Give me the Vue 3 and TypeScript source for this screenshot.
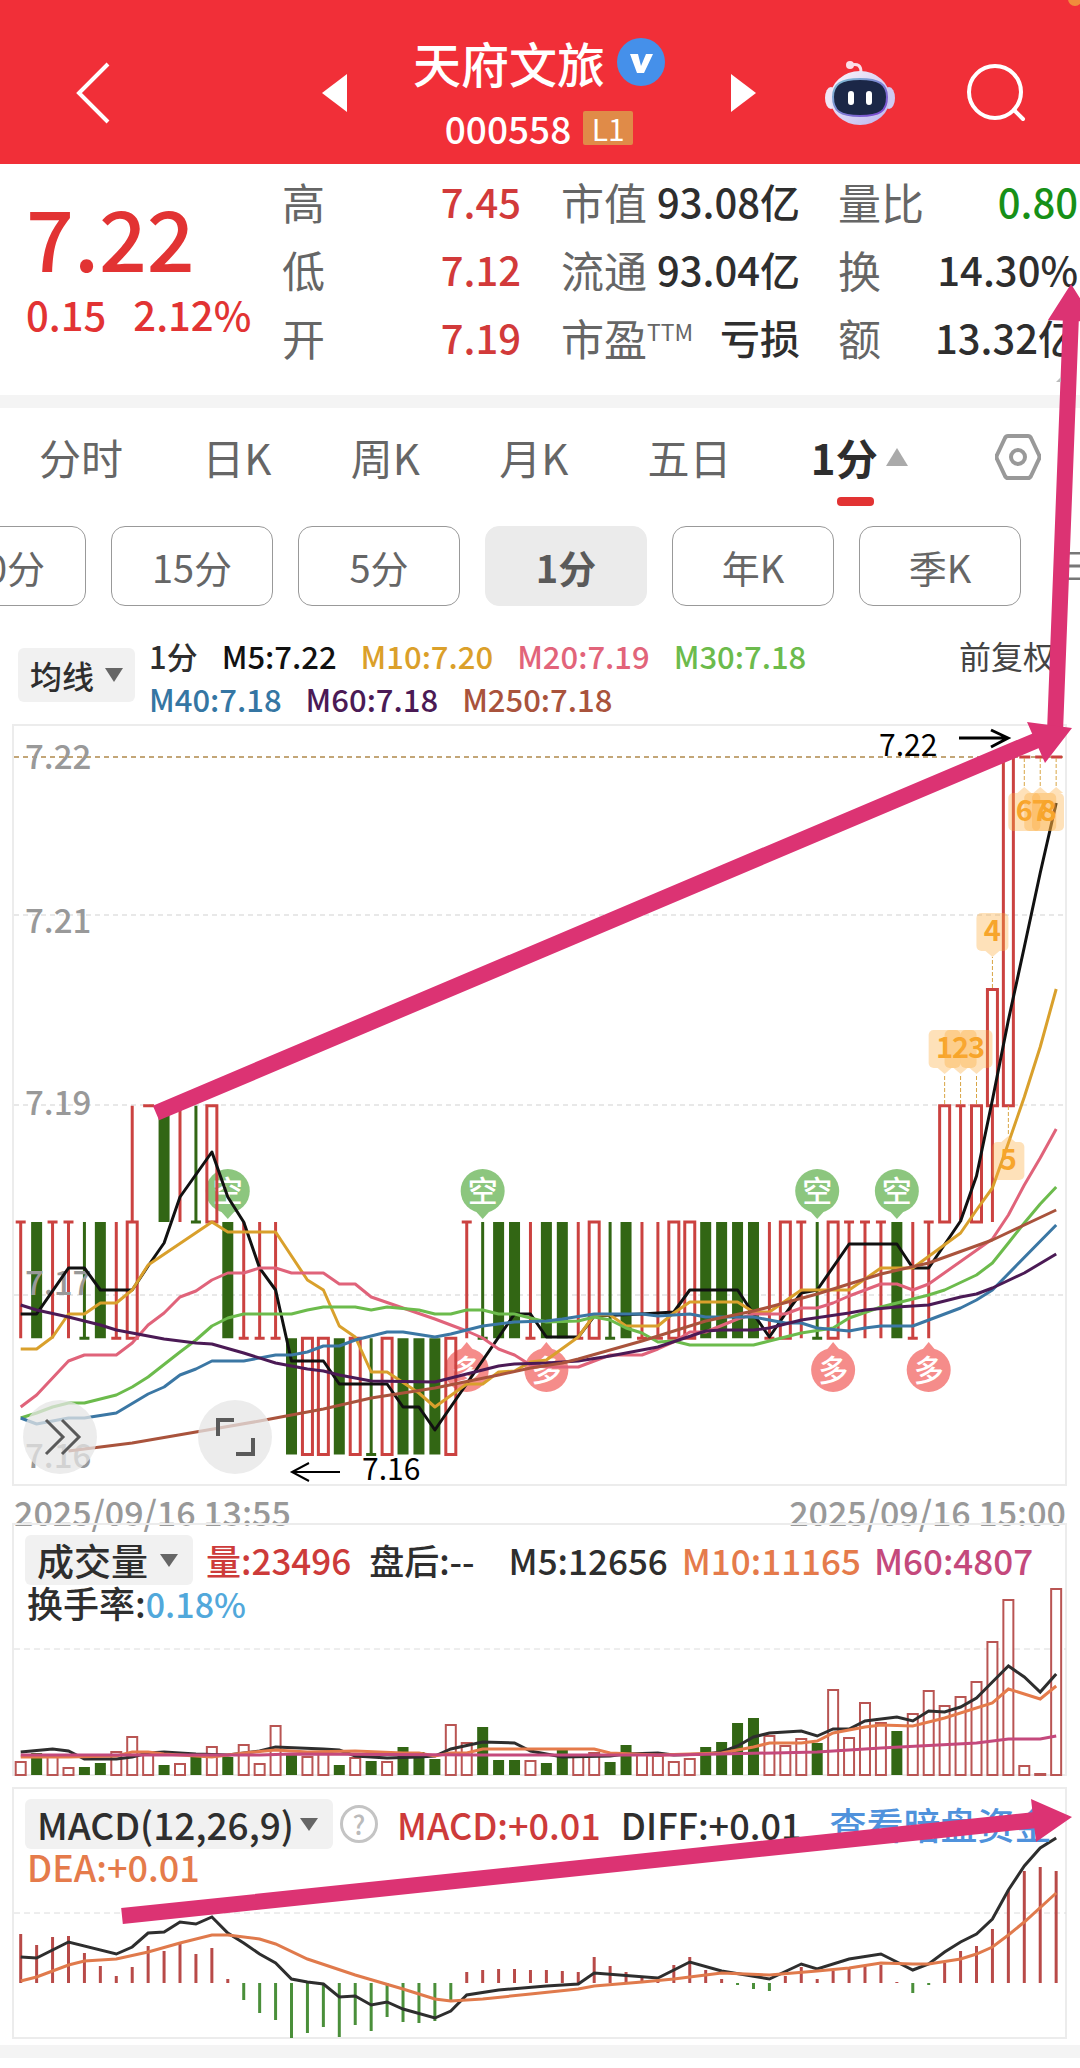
<script setup lang="ts">
type Pt = [number, number]
interface Series { name: string; color: string; pts: Pt[] }

const STEP = 15.93
const xAt = (i: number): number => 20.7 + i * STEP
const yAt = (price: number): number => 757 + (7.22 - price) * 11625
const line = (pts: Pt[]): string => pts.map(([i, y]) => `${xAt(i).toFixed(1)},${y}`).join(' ')

const RED = '#cb4240'
const GREEN = '#326614'

/* Quote header */
const quote = [
  [
    { label: '高', value: '7.45', tone: 'up' },
    { label: '低', value: '7.12', tone: 'up' },
    { label: '开', value: '7.19', tone: 'up' },
  ],
  [
    { label: '市值', value: '93.08亿', tone: '' },
    { label: '流通', value: '93.04亿', tone: '' },
    { label: '市盈', sup: 'TTM', value: '亏损', tone: '' },
  ],
  [
    { label: '量比', value: '0.80', tone: 'down' },
    { label: '换', value: '14.30%', tone: '' },
    { label: '额', value: '13.32亿', tone: '' },
  ],
]

const tabs = ['分时', '日K', '周K', '月K', '五日']
const periods = ['30分', '15分', '5分', '1分', '年K', '季K']

const averages = [
  { text: 'M5:7.22', color: '#111111' },
  { text: 'M10:7.20', color: '#dba02a' },
  { text: 'M20:7.19', color: '#e2647a' },
  { text: 'M30:7.18', color: '#6cbb4c' },
  { text: 'M40:7.18', color: '#3576a3' },
  { text: 'M60:7.18', color: '#4b1a55' },
  { text: 'M250:7.18', color: '#a9533c' },
]

/* Candles. G/R: body, g: green wick closed at the low, r/b: red wick closed at high/low, -: flat */
const runs: [string, number, number][] = [
  ['rGrrgGbR', 7.18, 7.17],
  ['-GrgR', 7.19, 7.18],
  ['Gbbb', 7.18, 7.17],
  ['GRRGRgRGGGR', 7.17, 7.16],
  ['rgGGbGGbRgGbbRRGGGGbRrgRrrrGbr', 7.18, 7.17],
  ['RrR', 7.19, 7.18],
  ['R', 7.2, 7.19],
  ['R', 7.22, 7.19],
  ['---', 7.22, 7.22],
]
const candles = runs
  .flatMap(([kinds, high, low]) => [...kinds].map((kind) => ({ kind, high, low })))
  .map((c, i) => ({ kind: c.kind, x: xAt(i), top: yAt(c.high), bottom: yAt(c.low) }))
const wicks = [
  { x: xAt(7), y1: yAt(7.19), y2: yAt(7.18) },
  { x: xAt(61), y1: yAt(7.19), y2: yAt(7.18) },
]

const priceLines: Series[] = [
  { name: 'M5', color: '#111111', pts: [[0, 1314], [1, 1314], [3, 1268], [4, 1268], [5, 1290], [7, 1290], [8, 1266], [9, 1243], [10, 1197], [12, 1152], [13, 1197], [14, 1222], [15, 1268], [16, 1290], [17, 1361], [19, 1361], [20, 1384], [23, 1384], [24, 1407], [25, 1407], [26, 1430], [31, 1314], [32, 1314], [33, 1337], [35, 1337], [36, 1316], [39, 1314], [41, 1312], [42, 1290], [45, 1290], [46, 1314], [47, 1337], [48, 1314], [49, 1293], [50, 1290], [52, 1244], [55, 1244], [56, 1268], [57, 1268], [59, 1221], [60, 1176], [61, 1100], [62, 1020], [63, 947], [64, 873], [65, 803]] },
  { name: 'M10', color: '#d9a02c', pts: [[0, 1349], [1, 1349], [2, 1337], [3, 1314], [4, 1314], [5, 1303], [6, 1303], [7, 1290], [8, 1265], [12, 1222], [13, 1232], [16, 1232], [18, 1280], [19, 1290], [20, 1326], [21, 1337], [22, 1372], [23, 1372], [25, 1393], [26, 1407], [28, 1384], [29, 1384], [30, 1372], [31, 1371], [32, 1362], [33, 1360], [35, 1337], [36, 1315], [37, 1315], [38, 1326], [40, 1326], [41, 1313], [42, 1302], [45, 1302], [46, 1312], [47, 1312], [49, 1290], [52, 1290], [54, 1268], [56, 1268], [59, 1233], [60, 1210], [61, 1188], [62, 1143], [63, 1097], [64, 1047], [65, 989]] },
  { name: 'M20', color: '#e0637a', pts: [[0, 1407], [1, 1395], [3, 1361], [4, 1355], [6, 1355], [7, 1343], [8, 1325], [9, 1313], [10, 1297], [11, 1291], [12, 1280], [13, 1273], [14, 1273], [15, 1268], [16, 1268], [17, 1273], [19, 1273], [20, 1284], [21, 1284], [22, 1297], [24, 1308], [26, 1319], [28, 1331], [29, 1338], [30, 1349], [31, 1355], [32, 1365], [33, 1367], [35, 1367], [36, 1361], [37, 1355], [39, 1355], [40, 1349], [41, 1342], [42, 1332], [43, 1332], [45, 1319], [46, 1314], [48, 1314], [49, 1308], [50, 1308], [51, 1303], [52, 1296], [54, 1284], [55, 1284], [56, 1290], [57, 1284], [61, 1239], [62, 1215], [63, 1185], [64, 1158], [65, 1129]] },
  { name: 'M30', color: '#6cbb4c', pts: [[0, 1418], [1, 1413], [2, 1407], [3, 1403], [4, 1403], [6, 1395], [7, 1387], [8, 1377], [10, 1352], [11, 1340], [12, 1326], [13, 1318], [14, 1314], [17, 1314], [18, 1310], [19, 1307], [21, 1307], [22, 1310], [23, 1307], [25, 1310], [26, 1314], [27, 1314], [28, 1310], [29, 1310], [30, 1314], [31, 1314], [32, 1318], [33, 1322], [35, 1321], [36, 1317], [37, 1320], [38, 1328], [39, 1333], [40, 1342], [41, 1341], [42, 1345], [46, 1345], [47, 1341], [49, 1333], [51, 1328], [52, 1318], [54, 1307], [57, 1295], [58, 1290], [60, 1275], [61, 1263], [62, 1243], [63, 1223], [64, 1204], [65, 1187]] },
  { name: 'M40', color: '#3b77a4', pts: [[0, 1418], [1, 1424], [3, 1418], [4, 1418], [6, 1413], [8, 1394], [9, 1387], [10, 1375], [11, 1369], [12, 1361], [14, 1361], [16, 1355], [17, 1355], [18, 1352], [19, 1346], [20, 1346], [21, 1340], [23, 1332], [24, 1332], [26, 1337], [27, 1334], [29, 1326], [31, 1322], [33, 1321], [34, 1319], [36, 1314], [39, 1314], [40, 1316], [42, 1314], [43, 1317], [46, 1317], [48, 1323], [49, 1323], [50, 1328], [52, 1331], [53, 1328], [54, 1326], [56, 1326], [59, 1308], [60, 1300], [61, 1290], [65, 1225]] },
  { name: 'M60', color: '#4b1a55', pts: [[0, 1305], [1, 1310], [3, 1317], [5, 1325], [6, 1330], [8, 1336], [9, 1339], [11, 1343], [12, 1344], [14, 1353], [16, 1363], [18, 1369], [19, 1371], [20, 1375], [22, 1381], [26, 1382], [28, 1374], [30, 1366], [31, 1364], [33, 1363], [35, 1361], [37, 1356], [40, 1347], [43, 1331], [44, 1330], [46, 1330], [47, 1328], [49, 1320], [52, 1313], [53, 1310], [55, 1307], [57, 1305], [59, 1297], [60, 1294], [61, 1288], [63, 1273], [65, 1254]] },
  { name: 'M250', color: '#a9533c', pts: [[3, 1451], [7, 1443], [11, 1432], [15, 1421], [19, 1409], [22, 1398], [26, 1388], [30, 1375], [32, 1368], [34, 1363], [35, 1359], [39, 1341], [43, 1321], [46, 1311], [47, 1307], [50, 1294], [54, 1274], [57, 1263], [61, 1240], [65, 1210]] },
]

const bears = [13, 29, 50, 55].map(xAt)
const bulls = [28, 33, 51, 57].map(xAt)

const axis = [
  { text: '7.22', y: 769 },
  { text: '7.21', y: 933 },
  { text: '7.19', y: 1115 },
  { text: '7.17', y: 1295 },
  { text: '7.16', y: 1468 },
]

/* Sequence counters: box top, pointer direction and the candle end that the dotted lead meets */
const counters = [
  { n: 1, i: 58, top: 1030, down: true, meet: 1104 },
  { n: 2, i: 59, top: 1030, down: true, meet: 1104 },
  { n: 3, i: 60, top: 1030, down: true, meet: 1104 },
  { n: 4, i: 61, top: 913, down: true, meet: 988 },
  { n: 5, i: 62, top: 1142, down: false, meet: 1106 },
  { n: 6, i: 63, top: 793, down: false, meet: 758 },
  { n: 7, i: 64, top: 793, down: false, meet: 758 },
  { n: 8, i: 65, top: 793, down: false, meet: 758 },
].map((c) => {
  const x = xAt(c.i)
  const cx = Math.min(x, 1048)
  const edge = c.down ? c.top + 38 : c.top
  const tip = c.down ? edge + 6 : edge - 6
  return { ...c, x, cx, tip, pointer: `${x - 7},${edge} ${x + 7},${edge} ${x},${tip}` }
})

/* Volume */
const greenVolume = new Set([1, 4, 5, 9, 11, 13, 17, 20, 22, 24, 25, 26, 29, 30, 31, 33, 34, 37, 38, 43, 44, 45, 46, 50, 55])
const volumeTops = [1762, 1753, 1755, 1768, 1767, 1763, 1752, 1737, 1755, 1765, 1764, 1757, 1747, 1757, 1745, 1764, 1726, 1755, 1757, 1754, 1765, 1758, 1761, 1762, 1747, 1752, 1759, 1725, 1743, 1727, 1760, 1760, 1761, 1763, 1749, 1757, 1753, 1762, 1745, 1755, 1756, 1762, 1759, 1747, 1742, 1723, 1718, 1736, 1746, 1739, 1743, 1690, 1738, 1703, 1723, 1731, 1714, 1691, 1706, 1697, 1682, 1642, 1600, 1766, 1774, 1589]
const volumes = volumeTops.map((top, i) => ({ x: xAt(i), top, green: greenVolume.has(i) }))

const volumeLines: Series[] = [
  { name: 'M5', color: '#2e2e2e', pts: [[0, 1752], [2, 1749], [3, 1751], [4, 1759], [6, 1759], [7, 1757], [8, 1753], [9, 1752], [11, 1754], [13, 1755], [15, 1751], [16, 1747], [19, 1749], [20, 1750], [21, 1756], [23, 1758], [25, 1757], [26, 1756], [27, 1749], [29, 1742], [31, 1743], [32, 1751], [33, 1754], [34, 1757], [37, 1756], [38, 1754], [40, 1753], [41, 1755], [43, 1754], [44, 1752], [45, 1746], [46, 1737], [47, 1733], [49, 1731], [50, 1736], [51, 1729], [52, 1729], [53, 1721], [55, 1717], [56, 1721], [57, 1711], [58, 1712], [59, 1707], [60, 1698], [61, 1682], [62, 1666], [63, 1677], [64, 1692], [65, 1674]] },
  { name: 'M10', color: '#e57b4b', pts: [[0, 1757], [3, 1757], [6, 1756], [7, 1752], [8, 1752], [9, 1754], [12, 1757], [14, 1753], [16, 1750], [18, 1752], [21, 1751], [24, 1753], [25, 1753], [26, 1756], [27, 1753], [28, 1753], [29, 1749], [36, 1749], [37, 1753], [40, 1755], [44, 1753], [46, 1747], [47, 1743], [49, 1743], [50, 1741], [51, 1733], [53, 1727], [54, 1725], [56, 1726], [58, 1718], [61, 1703], [62, 1689], [64, 1699], [65, 1686]] },
  { name: 'M60', color: '#c4497c', pts: [[0, 1755], [15, 1755], [17, 1754], [29, 1755], [41, 1755], [50, 1752], [54, 1748], [60, 1743], [62, 1739], [64, 1739], [65, 1736]] },
]

/* MACD */
const ZERO = 1983
const macdEnds = [1934, 1945, 1937, 1936, 1953, 1966, 1976, 1967, 1946, 1951, 1942, 1954, 1948, 1979, 2000, 2013, 2020, 2038, 2033, 2027, 2037, 2025, 2031, 2017, 2022, 2023, 2021, 2000, 1972, 1970, 1969, 1969, 1970, 1970, 1971, 1972, 1957, 1966, 1972, 1977, 1979, 1965, 1957, 1970, 1979, 1985, 1989, 1991, 1976, 1967, 1979, 1971, 1968, 1966, 1965, 1982, 1993, 1985, 1963, 1951, 1946, 1929, 1890, 1871, 1867, 1871]
const macdBars = macdEnds.map((end, i) => ({ x: xAt(i), end, color: end > ZERO ? '#4a8f3a' : '#b84a48' }))

const macdLines: Series[] = [
  { name: 'DIFF', color: '#2e2e2e', pts: [[0, 1957], [1, 1958], [3, 1942], [6, 1954], [7, 1947], [8, 1933], [9, 1932], [10, 1922], [11, 1924], [12, 1917], [13, 1933], [14, 1943], [15, 1954], [16, 1963], [17, 1979], [18, 1982], [19, 1984], [20, 1997], [21, 1996], [22, 2005], [23, 2002], [24, 2009], [26, 2018], [27, 2011], [28, 1995], [30, 1990], [33, 1986], [35, 1984], [36, 1973], [40, 1978], [42, 1962], [44, 1971], [47, 1979], [49, 1964], [50, 1969], [52, 1959], [54, 1954], [55, 1962], [56, 1970], [57, 1964], [58, 1952], [59, 1942], [60, 1934], [61, 1919], [62, 1890], [63, 1866], [64, 1848], [65, 1838]] },
  { name: 'DEA', color: '#e07a4c', pts: [[0, 1981], [1, 1977], [3, 1965], [4, 1961], [6, 1959], [8, 1952], [10, 1943], [12, 1935], [13, 1935], [15, 1939], [16, 1944], [18, 1959], [21, 1975], [24, 1989], [26, 1999], [27, 2001], [29, 1999], [32, 1994], [35, 1989], [36, 1986], [39, 1982], [41, 1979], [43, 1975], [44, 1973], [47, 1975], [50, 1971], [52, 1968], [54, 1963], [56, 1964], [57, 1964], [59, 1959], [60, 1954], [61, 1947], [62, 1935], [63, 1922], [65, 1893]] },
]
</script>

<template>
  <main class="page">
    <header class="topbar">
      <button class="icon back" aria-label="返回">
        <svg viewBox="0 0 36 62" width="36" height="62"><path d="M33 2 4 31l29 29" fill="none" stroke="#fff" stroke-width="4" /></svg>
      </button>
      <button class="icon prev" aria-label="上一只">
        <svg viewBox="0 0 25 38" width="25" height="38"><path d="M25 0v38L0 19z" fill="#fff" /></svg>
      </button>
      <div class="stock">
        <h1>
          天府文旅
          <svg class="verified" viewBox="0 0 48 48" width="48" height="48">
            <circle cx="24" cy="24" r="24" fill="#4590ea" />
            <path d="M13 16h8l3 12 5-12h7l-9 19h-7z" fill="#fff" />
          </svg>
        </h1>
        <p><span>000558</span><span class="level">L1</span></p>
      </div>
      <button class="icon next" aria-label="下一只">
        <svg viewBox="0 0 25 38" width="25" height="38"><path d="M0 0v38l25-19z" fill="#fff" /></svg>
      </button>
      <button class="icon robot" aria-label="智能助手">
        <svg viewBox="0 0 72 66" width="72" height="66">
          <defs>
            <linearGradient id="shell" x1="0" y1="0" x2="1" y2="1">
              <stop offset="0" stop-color="#fdf6fb" /><stop offset="1" stop-color="#b9b4ee" />
            </linearGradient>
            <linearGradient id="rim" x1="0" y1="0" x2="1" y2="1">
              <stop offset="0" stop-color="#7fc4d4" /><stop offset="1" stop-color="#7a3fd0" />
            </linearGradient>
          </defs>
          <path d="M27 5c7-2 10 1 10 7" fill="none" stroke="#fbdfe8" stroke-width="3" />
          <circle cx="26" cy="5" r="4" fill="#fbdfe8" />
          <ellipse cx="7" cy="38" rx="6" ry="11" fill="#f1e6f5" />
          <ellipse cx="65" cy="38" rx="6" ry="11" fill="#cfcaf2" />
          <ellipse cx="36" cy="38" rx="30" ry="27" fill="url(#shell)" />
          <path d="M36 19c19 0 27 5 27 18 0 14-7 19-27 19S9 51 9 37c0-13 8-18 27-18z" fill="#1b2747" stroke="url(#rim)" stroke-width="2" />
          <path d="M27 34v8M45 34v8" stroke="#fff" stroke-width="6" stroke-linecap="round" />
        </svg>
      </button>
      <button class="icon search" aria-label="搜索">
        <svg viewBox="0 0 60 58" width="60" height="58">
          <g fill="none" stroke="#fff" stroke-width="4" stroke-linecap="round"><circle cx="29" cy="28" r="26" /><path d="m48 46 9 9" /></g>
        </svg>
      </button>
      <i class="dot"></i>
    </header>

    <section class="quote">
      <div class="price">
        <strong>7.22</strong>
        <p><span>0.15</span><span>2.12%</span></p>
      </div>
      <dl v-for="(col, c) in quote" :key="c">
        <div v-for="q in col" :key="q.label">
          <dt>{{ q.label }}<small v-if="q.sup">{{ q.sup }}</small></dt>
          <dd :class="q.tone">{{ q.value }}</dd>
        </div>
      </dl>
    </section>

    <nav class="tabs">
      <button v-for="t in tabs" :key="t">{{ t }}</button>
      <button class="current">
        <span>1分</span>
        <svg viewBox="0 0 22 18" width="22" height="18"><path d="M0 18 11 0l11 18z" fill="#aaa" /></svg>
      </button>
      <button class="settings" aria-label="设置">
        <svg viewBox="0 0 46 46" width="46" height="46">
          <g fill="none" stroke="#999" stroke-linejoin="round">
            <path d="M13 2h20q2 0 3 2l8 17q1 2 0 4l-8 17q-1 2-3 2H13q-2 0-3-2L2 25q-1-2 0-4l8-17q1-2 3-2z" stroke-width="4" />
            <circle cx="23" cy="23" r="7" stroke-width="4" />
          </g>
        </svg>
      </button>
    </nav>

    <div class="periods">
      <button v-for="p in periods" :key="p" :class="{ on: p === '1分' }">{{ p }}</button>
      <button class="more" aria-label="更多周期">
        <svg viewBox="0 0 30 28" width="30" height="28"><path d="M0 1h30M0 14h30M0 27h30" stroke="#777" stroke-width="3" /></svg>
      </button>
    </div>

    <div class="legend">
      <label class="pick small">
        <select aria-label="主图指标"><option>均线</option></select>
        <svg viewBox="0 0 18 14" width="18" height="14"><path d="M0 0h18L9 14z" fill="#666" /></svg>
      </label>
      <div class="values">
        <span>1分</span>
        <span v-for="a in averages" :key="a.text" :style="{ color: a.color }">{{ a.text }}</span>
      </div>
      <button class="adjust">前复权</button>
    </div>

    <svg class="plot" viewBox="0 724 1080 764">
      <rect x="13" y="725" width="1053" height="760" fill="none" stroke="#ececec" stroke-width="2" />
      <path d="M14 915H1066M14 1105H1066M14 1295H1066" stroke="#e8e8e8" stroke-width="2" stroke-dasharray="5 4" />
      <path d="M14 757H1066" stroke="#c3a677" stroke-width="2" stroke-dasharray="5 4" />

      <g v-for="x in bears" :key="x">
        <path :d="`M${x - 9} 1209h18l-9 10z`" fill="#8cc67e" />
        <circle :cx="x" cy="1191" r="22" fill="#8cc67e" />
        <text :x="x" y="1202" class="mark">空</text>
      </g>
      <g v-for="x in bulls" :key="x">
        <path :d="`M${x - 9} 1353h18l-9 -11z`" fill="#f58c8a" />
        <circle :cx="x" cy="1370" r="22" fill="#f58c8a" />
        <text :x="x" y="1381" class="mark">多</text>
      </g>

      <line v-for="w in wicks" :key="w.x" :x1="w.x" :x2="w.x" :y1="w.y1" :y2="w.y2" :stroke="RED" stroke-width="3" />
      <g v-for="(c, i) in candles" :key="i">
        <rect v-if="c.kind === 'G'" :x="c.x - 5.5" :y="c.top" width="11" :height="c.bottom - c.top" :fill="GREEN" />
        <rect v-else-if="c.kind === 'R'" :x="c.x - 5" :y="c.top" width="10" :height="c.bottom - c.top" fill="none" :stroke="RED" stroke-width="3" />
        <path v-else-if="c.kind === '-'" :d="`M${c.x - 5} ${c.top}h11`" :stroke="RED" stroke-width="3" />
        <path v-else-if="c.kind === 'g'" :d="`M${c.x} ${c.top}V${c.bottom}m-5 0h10`" fill="none" :stroke="GREEN" stroke-width="3" />
        <path v-else-if="c.kind === 'r'" :d="`M${c.x} ${c.bottom}V${c.top}m-5 0h10`" fill="none" :stroke="RED" stroke-width="3" />
        <path v-else :d="`M${c.x} ${c.top}V${c.bottom}m-5 0h10`" fill="none" :stroke="RED" stroke-width="3" />
      </g>

      <text v-for="a in axis" :key="a.text" x="25" :y="a.y" class="axis">{{ a.text }}</text>

      <polyline v-for="s in priceLines" :key="s.name" :points="line(s.pts)" fill="none" :stroke="s.color" stroke-width="3" stroke-linejoin="round" />

      <g v-for="c in counters" :key="c.n">
        <path :d="`M${c.x} ${c.meet}V${c.tip}`" stroke="#d8a545" stroke-width="1" stroke-dasharray="4 2" />
        <g fill="#fcab3c" fill-opacity="0.36">
          <rect :x="c.cx - 16" :y="c.top" width="32" height="38" rx="5" />
          <polygon :points="c.pointer" />
        </g>
        <text :x="c.cx" :y="c.top + 28" class="count">{{ c.n }}</text>
      </g>

      <text x="879" y="756" class="extreme">7.22</text>
      <path d="M959 738h49M991 730l17 8-17 9" fill="none" stroke="#000" stroke-width="3" />
      <text x="362" y="1480" class="extreme">7.16</text>
      <path d="M340 1472h-48M309 1463l-17 9 17 9" fill="none" stroke="#000" stroke-width="2" />

      <g fill="#e6e6e6" fill-opacity="0.75"><circle cx="60" cy="1437" r="37" /><circle cx="235" cy="1437" r="37" /></g>
      <path d="M46 1420l17 17-17 17M62 1420l17 17-17 17" fill="none" stroke="#5a5a5a" stroke-width="3" />
      <path d="M218 1436v-16h16M253 1438v16h-17" fill="none" stroke="#5a5a5a" stroke-width="4" />
    </svg>

    <div class="dates"><time>2025/09/16 13:55</time><time>2025/09/16 15:00</time></div>

    <section class="panel">
      <svg class="chart" viewBox="0 1522 1080 264">
        <path d="M13 1775V1524H1066V1775z" fill="none" stroke="#ececec" stroke-width="2" />
        <path d="M14 1649H1066" stroke="#dcdcdc" stroke-width="1" stroke-dasharray="6 4" />
        <g v-for="(v, i) in volumes" :key="i">
          <rect v-if="v.green" :x="v.x - 5.5" :y="v.top" width="11" :height="1775 - v.top" :fill="GREEN" />
          <rect v-else :x="v.x - 5" :y="v.top" width="10" :height="1775 - v.top" fill="#fff" stroke="#b95553" stroke-width="2" />
        </g>
        <polyline v-for="s in volumeLines" :key="s.name" :points="line(s.pts)" fill="none" :stroke="s.color" stroke-width="3" />
      </svg>
      <div class="readout">
        <label class="pick">
          <select aria-label="副图指标一"><option>成交量</option></select>
          <svg viewBox="0 0 18 13" width="18" height="13"><path d="M0 0h18L9 13z" fill="#666" /></svg>
        </label>
        <span class="red first">量:23496</span>
        <span class="after">盘后:--</span>
        <span class="m5">M5:12656</span>
        <span class="orange m10">M10:11165</span>
        <span class="magenta m60">M60:4807</span>
      </div>
      <p class="second">换手率:<b>0.18%</b></p>
    </section>

    <section class="panel">
      <svg class="chart" viewBox="0 1786 1080 259">
        <rect x="13" y="1788" width="1053" height="250" fill="none" stroke="#ececec" stroke-width="2" />
        <path d="M14 1913H1066" stroke="#dcdcdc" stroke-width="1" stroke-dasharray="6 4" />
        <line v-for="(b, i) in macdBars" :key="i" :x1="b.x" :x2="b.x" :y1="b.end" :y2="ZERO" :stroke="b.color" stroke-width="3" />
        <polyline v-for="s in macdLines" :key="s.name" :points="line(s.pts)" fill="none" :stroke="s.color" stroke-width="3" />
      </svg>
      <div class="readout macd">
        <label class="pick wide">
          <select aria-label="副图指标二"><option>MACD(12,26,9)</option></select>
          <svg viewBox="0 0 18 13" width="18" height="13"><path d="M0 0h18L9 13z" fill="#666" /></svg>
        </label>
        <button class="help" aria-label="指标说明">?</button>
        <span class="red">MACD:+0.01</span>
        <span class="diff">DIFF:+0.01</span>
        <a href="#flow">查看暗盘资金</a>
      </div>
      <p class="second orange">DEA:+0.01</p>
    </section>

    <div class="band"></div>

    <svg class="notes" viewBox="0 0 1080 2068" aria-hidden="true">
      <g stroke="#dc3373" stroke-width="16">
        <path d="M156 1113 1040 739M1071 315 1055 732M122 1916 1036 1820" />
      </g>
      <path d="M1027 722l45 6-27 35zM1071 284l-23 36 47 2zM1072 1817l-41-18 5 43z" fill="#dc3373" />
      <path d="M1056 382l5-5v5z" fill="#bbb" />
    </svg>
  </main>
</template>

<style>
body {
  margin: 0;
  background: #fff;
}
</style>

<style scoped>
.page {
  position: relative;
  overflow: hidden;
  padding-bottom: 10px;
  background: #fff;
  color: #2e2e2e;
  font-family: 'Noto Sans CJK SC', 'Noto Sans', sans-serif;
  font-weight: 500;
}
.page * { box-sizing: border-box; }
svg { display: block; }
h1, p, dl, dd { margin: 0; }
button, select {
  margin: 0;
  padding: 0;
  border: 0;
  background: none;
  color: inherit;
  font: inherit;
}

.topbar {
  position: relative;
  display: flex;
  align-items: center;
  height: 164px;
  padding: 22px 54px 0 75px;
  background: #f12f38;
  color: #fff;
}
.prev { margin-left: 211px; }
.stock {
  flex: 1;
  display: flex;
  flex-direction: column;
  align-items: center;
}
h1 {
  display: flex;
  align-items: center;
  gap: 12px;
  font-size: 48px;
  line-height: 70px;
  font-weight: 500;
}
.stock p {
  display: flex;
  align-items: center;
  gap: 12px;
  font-size: 37px;
  line-height: 62px;
}
.level {
  width: 50px;
  background: #e08b48;
  border-radius: 2px;
  font-size: 30px;
  line-height: 34px;
  font-weight: 400;
  text-align: center;
}
.robot { margin: 0 70px 0 68px; }
.dot {
  position: absolute;
  top: -8px;
  right: -2px;
  width: 14px;
  height: 14px;
  border-radius: 50%;
  background: #f08c3c;
}

.quote {
  display: flex;
  height: 231px;
  padding: 3px 2px 0 26px;
}
.price {
  width: 256px;
  color: #e23333;
}
.price strong {
  display: block;
  margin-top: 19px;
  font-size: 84px;
  line-height: 100px;
  font-weight: 500;
}
.price p {
  display: flex;
  gap: 27px;
  font-size: 40px;
  line-height: 56px;
}
dl { width: 239px; }
dl + dl { margin-left: 40px; }
dl:last-child { flex: 1; margin-left: 38px; }
dl div {
  display: flex;
  justify-content: space-between;
  line-height: 68px;
}
dt {
  display: flex;
  color: #666;
  font-size: 43px;
  font-weight: 400;
  white-space: nowrap;
}
dt small { font-size: 23px; line-height: 56px; }
dd { font-size: 40px; white-space: nowrap; }
.up { color: #d23a3a; }
.down { color: #179017; }

.tabs {
  display: flex;
  align-items: center;
  height: 131px;
  padding: 0 39px 20px 39px;
  border-top: 13px solid #f4f4f4;
  color: #666;
  font-size: 42px;
  line-height: 60px;
  font-weight: 400;
  justify-content: space-between;
}
.current {
  display: flex;
  align-items: center;
  gap: 8px;
  margin-right: 8px;
  color: #2e2e2e;
  font-weight: 700;
}
.current span {
  position: relative;
}
.current span::after {
  content: '';
  position: absolute;
  left: 26px;
  bottom: -19px;
  width: 37px;
  height: 9px;
  border-radius: 4px;
  background: #e23333;
}

.periods {
  display: flex;
  gap: 25px;
  margin-left: -76px;
}
.periods button {
  flex: none;
  width: 162px;
  height: 80px;
  border: 1px solid #999;
  border-radius: 14px;
  color: #666;
  font-size: 38px;
  font-weight: 400;
}
.periods .on {
  border-color: #ebebeb;
  background: #ebebeb;
  color: #5a5a5a;
  font-weight: 700;
}
.periods .more {
  width: 30px;
  margin-left: 8px;
  border: 0;
}

.legend {
  display: flex;
  align-items: flex-start;
  height: 118px;
  padding: 28px 0 0 18px;
  font-size: 31px;
  line-height: 43px;
}
.values {
  flex: 1;
  display: flex;
  flex-wrap: wrap;
  gap: 0 24px;
  margin-left: 14px;
  padding-right: 130px;
}
.adjust {
  margin-right: 25px;
  color: #444;
  font-size: 32px;
  font-weight: 400;
  line-height: 43px;
}

.pick {
  display: grid;
  align-items: center;
  width: 168px;
  height: 50px;
  border-radius: 6px;
  background: #f1f1f1;
}
.pick > * { grid-area: 1 / 1; }
.pick select {
  appearance: none;
  width: 100%;
  height: 50px;
  padding-left: 12px;
  font-size: 37px;
  line-height: 50px;
}
.pick svg {
  justify-self: end;
  margin-right: 15px;
}
.pick.wide { width: 308px; }
.pick.small {
  width: 117px;
  height: 54px;
  margin-top: 14px;
}
.pick.small select { font-size: 32px; }
.pick.small svg { margin-right: 12px; }

.plot, .chart { width: 100%; height: auto; }
.axis { font-size: 33px; fill: #999; }
.mark { font-size: 30px; fill: #fff; text-anchor: middle; }
.count { font-size: 29px; fill: #f7a52b; text-anchor: middle; font-weight: 700; }
.extreme { font-size: 30px; fill: #000; font-weight: 400; }

.dates {
  display: flex;
  justify-content: space-between;
  height: 34px;
  padding: 0 14px;
  color: #999;
  font-size: 34px;
  line-height: 48px;
}

.panel { display: grid; }
.panel > * { grid-area: 1 / 1; }
.readout {
  z-index: 1;
  align-self: start;
  display: flex;
  align-items: center;
  margin: 13px 0 0 25px;
  font-size: 35px;
  line-height: 50px;
  white-space: nowrap;
}
.readout.macd { font-size: 36px; }
.second {
  z-index: 1;
  align-self: start;
  margin: 57px 0 0 27px;
  font-size: 36px;
  line-height: 46px;
}
.second b { color: #51a8db; font-size: 34px; font-weight: 500; }
.first { margin-left: 13px; }
.after { margin-left: 18px; }
.m5 { margin-left: 34px; }
.m10 { margin-left: 14px; }
.m60 { margin-left: 13px; }
.red { color: #cd3b3a; }
.orange { color: #e57b4b; }
.magenta { color: #c4497c; }
.help {
  width: 38px;
  height: 38px;
  margin: 0 19px 0 7px;
  border: 3px solid #c4c4c4;
  border-radius: 50%;
  color: #bbb;
  font-size: 26px;
  line-height: 30px;
}
.diff { margin-left: 20px; }
.readout a {
  margin-left: 28px;
  color: #4f92dc;
  font-size: 37px;
  text-decoration: none;
}
.band { height: 13px; background: #f4f4f4; }

.notes {
  position: absolute;
  z-index: 2;
  top: 0;
  left: 0;
  width: 100%;
  height: auto;
  fill: none;
  pointer-events: none;
}
</style>
